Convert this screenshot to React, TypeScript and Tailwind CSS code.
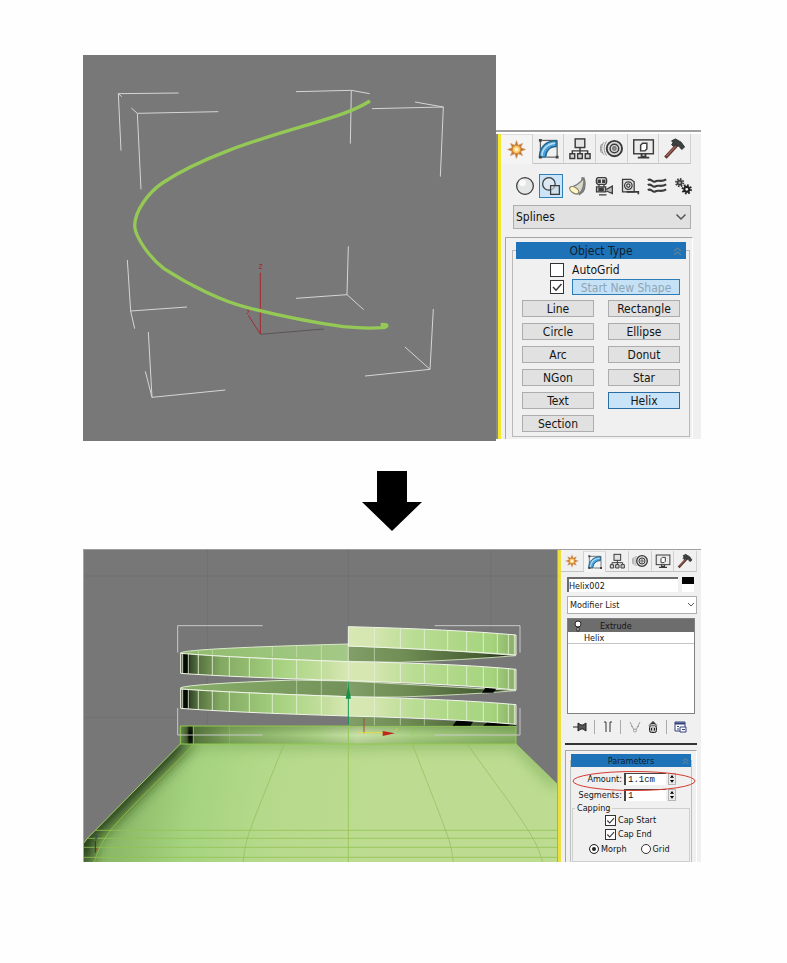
import type { ReactNode } from 'react';

type IconProps = { className: string };

function Icon({ className, children }: { className: string; children: ReactNode }) {
  return (
    <svg viewBox="0 0 24 24" className={className} fill="none" stroke="#3b3b3b" strokeWidth="1.5" aria-hidden="true">
      {children}
    </svg>
  );
}

const CreateIcon = ({ className }: IconProps) => (
  <Icon className={className}>
    <path d="M12 2.500 13.800 7.500 18.500 5.500 16.500 10 21.500 12 16.500 14 18.500 18.500 13.800 16.500 12 21.500 10.200 16.500 5.500 18.500 7.500 14 2.500 12 7.500 10 5.500 5.500 10.200 7.500Z" fill="#b9743a" stroke="#dfa878" strokeWidth=".6" />
    <circle cx="12" cy="12" r="4.300" fill="#ffd27a" stroke="#dc8b32" />
    <circle cx="12" cy="12" r="1.800" fill="#fff6d8" stroke="none" />
  </Icon>
);

const ModifyIcon = ({ className }: IconProps) => (
  <Icon className={className}>
    <path d="M3.500 20V3.500H21v17M10 21h11" strokeWidth="1" />
    <path d="M2.500 21C2.500 10.500 9.500 4 20 4v6c-7 0-11 5-11 11Z" fill="#4aa0d8" stroke="#23668f" />
    <path d="M5 20C5.500 12.500 10.500 7 19 6.300" stroke="#b4dcf3" strokeWidth="1.800" />
    <path d="M2 2h3v3H2zM19.500 19.500h3v3h-3zM2 19.500h3v3H2z" fill="#444" stroke="none" />
  </Icon>
);

const HierarchyIcon = ({ className }: IconProps) => (
  <Icon className={className}>
    <rect x="7.500" y="2" width="10" height="9" fill="#e3e3e3" />
    <path d="M12.500 11v7M4.500 17.500v-3h16v3" />
    <path d="M2 17.500h5v5H2zM10 17.500h5v5h-5zM18 17.500h5v5h-5z" fill="#d5d5d5" />
  </Icon>
);

const MotionIcon = ({ className }: IconProps) => (
  <Icon className={className}>
    <circle cx="15" cy="12" r="8" strokeWidth="2" fill="#dcdcdc" />
    <circle cx="15" cy="12" r="4.500" />
    <circle cx="15" cy="12" r="1.800" fill="#999" stroke="#777" />
    <path d="M7 4.500c-3.500 4-3.500 11 0 15M4 5.500c-3 4-3 9 0 13M1.500 7.500c-1.500 3-1.500 6 0 9" stroke="#8b8b8b" strokeWidth="1" />
  </Icon>
);

const DisplayIcon = ({ className }: IconProps) => (
  <Icon className={className}>
    <rect x="1.800" y="3" width="20.500" height="14.500" fill="#ececec" />
    <path d="M9 8.500 11 6.500h4.500v6l-2 2H9z" fill="#fff" />
    <path d="M10 17.500v3h4v-3M6 21.500h12" strokeWidth="2" />
  </Icon>
);

const HammerIcon = ({ className }: IconProps) => (
  <Icon className={className}>
    <path d="M2.500 21.500 15 8" stroke="#5b332a" strokeWidth="3.500" />
    <path d="M3.500 20 14 8.500" stroke="#a3655a" strokeWidth="1.500" />
    <path d="m9 4 4-2 6 3.500 3.500 5-3 2.500-3-3.500-3.500-1-2 1.500-2-2 1.500-2z" fill="#3e4142" stroke="#2d3030" strokeWidth="1" />
  </Icon>
);

const panels = [
  { name: 'Create', Glyph: CreateIcon },
  { name: 'Modify', Glyph: ModifyIcon },
  { name: 'Hierarchy', Glyph: HierarchyIcon },
  { name: 'Motion', Glyph: MotionIcon },
  { name: 'Display', Glyph: DisplayIcon },
  { name: 'Utilities', Glyph: HammerIcon },
];

function PanelTabs({ active, size }: { active: string; size: 'large' | 'small' }) {
  const large = size === 'large';
  return (
    <div className={large ? 'flex h-[30px] pr-2.5' : 'flex h-[22px] pt-px pr-1'} role="tablist">
      {panels.map(({ name, Glyph }) => (
        <button
          key={name}
          type="button"
          role="tab"
          aria-label={name}
          aria-selected={name === active}
          className={
            'flex flex-1 items-center justify-center border-r border-[#d0d0d0] ' +
            (name === active ? 'border-t border-t-[#dcdcdc] bg-[#f4f4f4]' : 'border-b border-b-[#c4c4c4]')
          }
        >
          <Glyph className={large ? 'size-[23px]' : 'size-4'} />
        </button>
      ))}
    </div>
  );
}

const categories: { name: string; art: ReactNode }[] = [
  {
    name: 'Geometry',
    art: (
      <>
        <circle cx="12" cy="12" r="10" fill="#e4e6e6" />
        <circle cx="9" cy="8" r="4" fill="#fafafa" stroke="none" />
      </>
    ),
  },
  {
    name: 'Shapes',
    art: (
      <>
        <circle cx="9.500" cy="9.500" r="7.500" fill="#dce9f2" />
        <path d="M11.500 11.500H22V22H11.500z" fill="#cfdfea" fillOpacity=".6" />
      </>
    ),
  },
  {
    name: 'Lights',
    art: (
      <>
        <path d="M17 2c5 1 4 13 1 17l-4 3z" fill="#8b8d87" stroke="#777" />
        <path d="M19 2.500C14 9 9 12 2.500 13.500c0 5 5 8.500 9.500 8C17 20 20 10 19 2.500Z" fill="#d8d8cb" stroke="#777" />
        <ellipse cx="7.500" cy="17" rx="6" ry="3.500" transform="rotate(32 7.500 17)" fill="#fff6c2" stroke="#8a8875" />
      </>
    ),
  },
  {
    name: 'Cameras',
    art: (
      <>
        <path d="M5 2h8c3 0 3 8 0 8H5C2 10 2 2 5 2Z" fill="#e4e4e4" />
        <path d="M5 5h2.500v2.500H5zM10.500 5H13v2.500h-2.500zM6 10v3M12 10v3" fill="#333" />
        <path d="M3 13h11v6H3zM15 16l7-4v9l-7-3M6 22.500h9" fill="#bbb" />
        <path d="M6 14.500h5v3H6z" fill="#333" />
      </>
    ),
  },
  {
    name: 'Helpers',
    art: (
      <>
        <path d="M3 4h10l4 3v12H3z" fill="#dedede" />
        <circle cx="10" cy="11.500" r="4.500" fill="#f3f3f3" />
        <circle cx="10" cy="11.500" r="2" />
        <path d="M8 19h14v3" strokeWidth="2" />
      </>
    ),
  },
  {
    name: 'Space Warps',
    art: (
      <path
        d="M1 5c4-3 6 4 9 1.500S17 8 23 4M1 11c4-3 6 4 9 1.500s7 1.500 13-2.500M1 17c4-3 6 4 9 1.500s7 1.500 13-2.500"
        strokeWidth="2.500"
      />
    ),
  },
  {
    name: 'Systems',
    art: (
      <>
        <circle cx="8" cy="8" r="2.500" fill="#aaa" strokeWidth="2" />
        <circle cx="8" cy="8" r="4.500" strokeWidth="2" strokeDasharray="2 1.500" />
        <circle cx="16.500" cy="16" r="3" strokeWidth="2.500" stroke="#222" />
        <circle cx="16.500" cy="16" r="5" strokeWidth="2.500" strokeDasharray="2 1.900" stroke="#222" />
      </>
    ),
  },
];

function Chevrons({ className }: IconProps) {
  return (
    <svg viewBox="0 0 9 10" className={className} fill="none" stroke="#5c8198" strokeWidth="1.300" aria-hidden="true">
      <path d="m1 5 3.500-3L8 5M1 9l3.500-3L8 9" />
    </svg>
  );
}

function SelectArrow({ className }: IconProps) {
  return (
    <svg viewBox="0 0 12 8" className={className} fill="none" stroke="#555" strokeWidth="1.500" aria-hidden="true">
      <path d="m1.500 1.500 4.500 4.500 4.500-4.500" />
    </svg>
  );
}

function CheckBox({ id, size, checked }: { id: string; size: string; checked?: boolean }) {
  return (
    <span className={'relative block shrink-0 ' + size}>
      <input
        id={id}
        type="checkbox"
        defaultChecked={checked}
        className="peer block size-full appearance-none border border-[#333] bg-white"
      />
      <svg viewBox="0 0 14 14" className="pointer-events-none absolute inset-0 hidden size-full peer-checked:block" fill="none" stroke="#333" strokeWidth="1.400" aria-hidden="true">
        <path d="m3 7 3 3.200L11.500 4" />
      </svg>
    </span>
  );
}

const shapes = ['Line', 'Rectangle', 'Circle', 'Ellipse', 'Arc', 'Donut', 'NGon', 'Star', 'Text', 'Helix', 'Section'];

function CreatePanel() {
  return (
    <aside className="mb-0.5 flex w-[205px] shrink-0 flex-col self-end border-t-2 border-[#a0a0a0] bg-[#f0f0f0] text-xs leading-4">
      <div className="flex border-t-2 border-white">
        <div className="w-[5px] shrink-0 border-r-3 border-[#f3e72b] bg-[#8a8a8a]" />
        <div className="min-w-0 flex-1">
          <PanelTabs active="Create" size="large" />
          <div className="flex justify-between pt-2.5 pr-1.5 pl-3">
            {categories.map(({ name, art }) => (
              <button
                key={name}
                type="button"
                aria-label={name}
                className={
                  'flex size-6 items-center justify-center ' +
                  (name === 'Shapes' ? 'border border-[#2f7fb8] bg-[#cbe4f7]' : '')
                }
              >
                <Icon className="size-5">{art}</Icon>
              </button>
            ))}
          </div>
          <div className="relative mt-[7px] mr-2.5 ml-3">
            <select aria-label="Category" className="block h-6 w-full appearance-none border border-[#adadad] bg-[#e1e1e1] px-0.5 text-[#111]">
              <option>Splines</option>
            </select>
            <SelectArrow className="pointer-events-none absolute top-2 right-1 w-3" />
          </div>
          <div className="mt-2 mr-2 ml-1 border-t border-r border-l border-[#a6a6a6] border-r-white pt-1 pr-0.5 pb-0.5 pl-1.5">
            <section className="relative px-1">
              <div className="absolute inset-x-0 top-2 bottom-0 border border-[#b9b9b9]" />
              <h2 className="relative flex h-[17px] items-center justify-center bg-[#1e73b8] text-[#10202c]">
                Object Type
                <Chevrons className="absolute right-1 w-[9px]" />
              </h2>
              <div className="relative px-1.5 pt-[3px] pb-[5px]">
                <div className="flex items-center gap-2 pl-7">
                  <CheckBox id="autogrid" size="size-[14px]" />
                  <label htmlFor="autogrid">AutoGrid</label>
                </div>
                <div className="flex items-center gap-2 pt-px pl-7">
                  <CheckBox id="startnew" size="size-[14px]" checked />
                  <button type="button" aria-labelledby="startnew-text" className="h-4 flex-1 overflow-hidden border border-[#2b7cb8] bg-[#c5e1f6] text-[#8fa6b6]">
                    <label id="startnew-text" htmlFor="startnew">Start New Shape</label>
                  </button>
                </div>
                <div className="grid grid-cols-2 gap-x-3.5 gap-y-1.5 pt-[5px]">
                  {shapes.map((shape) => (
                    <button
                      key={shape}
                      type="button"
                      className={
                        'flex h-[17px] items-center justify-center border ' +
                        (shape === 'Helix' ? 'border-[#2b6ea3] bg-[#c9e3f8]' : 'border-[#adadad] bg-[#e1e1e1]')
                      }
                    >
                      {shape}
                    </button>
                  ))}
                </div>
              </div>
            </section>
          </div>
        </div>
      </div>
    </aside>
  );
}

function Spinner({ label }: { label: string }) {
  return (
    <span className="flex w-2 shrink-0 flex-col border border-[#b5b5b5] bg-[#e9e9e9]">
      <button type="button" aria-label={'Increase ' + label} className="flex h-[5px] items-center justify-center">
        <svg viewBox="0 0 6 4" className="w-1" aria-hidden="true"><path d="M3 0 6 4H0z" /></svg>
      </button>
      <button type="button" aria-label={'Decrease ' + label} className="flex h-[5px] items-center justify-center">
        <svg viewBox="0 0 6 4" className="w-1" aria-hidden="true"><path d="M3 4 6 0H0z" /></svg>
      </button>
    </span>
  );
}

function NumberRow({ id, label, value }: { id: string; label: string; value: string }) {
  return (
    <div className="flex h-4 items-center justify-end gap-0.5 pr-4">
      <label htmlFor={id}>{label}:</label>
      <input
        id={id}
        defaultValue={value}
        className="h-3 w-[42px] border-t border-l-2 border-[#444] bg-white px-0.5 font-['Liberation_Mono',monospace]"
      />
      <Spinner label={label} />
    </div>
  );
}

const Separator = () => <span className="h-3.5 w-px bg-[#aaa]" />;

function StackTools() {
  return (
    <div className="flex h-[18px] items-center justify-between pr-3.5 pl-3">
      <button type="button" aria-label="Pin stack">
        <svg viewBox="0 0 14 10" className="w-3.5" stroke="#222" fill="#555" aria-hidden="true">
          <path d="M0 5h5M5 1v8l3-2h2l3 2V1l-3 2H8z" />
        </svg>
      </button>
      <Separator />
      <button type="button" aria-label="Show end result">
        <svg viewBox="0 0 10 12" className="w-2.5" fill="none" stroke="#333" aria-hidden="true">
          <path d="M1 1h2v10M9 1H7v10" />
        </svg>
      </button>
      <Separator />
      <button type="button" aria-label="Make unique">
        <svg viewBox="0 0 12 12" className="w-3" fill="none" stroke="#a0a0a0" aria-hidden="true">
          <path d="m1 1 4 8M11 1 7 9" />
          <circle cx="6" cy="9.500" r="1.500" />
          <path d="M2 5.500h2M8 5.500h2" />
        </svg>
      </button>
      <button type="button" aria-label="Remove modifier">
        <svg viewBox="0 0 10 12" className="w-2.5" fill="#bbb" stroke="#222" aria-hidden="true">
          <rect x="1.500" y="4.500" width="7" height="7" rx="2" />
          <path d="M1 4.500c2-3 6-3 8 0M4 2.500V1h2v1.500" />
          <path d="M3.500 7v2.500M6.500 7v2.500" />
        </svg>
      </button>
      <Separator />
      <button type="button" aria-label="Configure modifier sets">
        <svg viewBox="0 0 13 12" className="w-[13px]" fill="#fff" stroke="#31417c" aria-hidden="true">
          <path d="M1 1h10v9H1z" />
          <path d="M1 2.500h10" strokeWidth="2" />
          <path d="M3 5.500h2M3 8h2M6 6h6v5H6zM8 8.500h3" />
        </svg>
      </button>
    </div>
  );
}

function ModifyPanel() {
  return (
    <aside className="flex w-[143px] shrink-0 border-t border-[#a0a0a0] bg-[#f0f0f0] text-[9px] leading-3">
      <div className="w-[3px] shrink-0 bg-[#eadf3c]" />
      <div className="flex min-w-0 flex-1 flex-col">
        <PanelTabs active="Modify" size="small" />
        <div className="flex gap-1 pt-[5px] pr-[7px] pl-1.5">
          <input aria-label="Object name" defaultValue="Helix002" className="h-[15px] min-w-0 flex-1 border-t-2 border-l-2 border-[#6b6b6b] bg-white" />
          <button type="button" aria-label="Object color" className="h-[15px] w-3 border-b-8 border-white bg-black" />
        </div>
        <div className="relative mt-1 mr-1 ml-1.5">
          <select aria-label="Modifier List" className="block h-[18px] w-full appearance-none border border-[#adadad] bg-white px-0.5 text-[#222]">
            <option>Modifier List</option>
          </select>
          <SelectArrow className="pointer-events-none absolute top-1.5 right-0.5 w-2" />
        </div>
        <ul className="mt-1 mr-1.5 ml-1.5 h-24 border border-[#808080] bg-white">
          <li className="flex h-[13px] items-center bg-[#6d6d6d]">
            <svg viewBox="0 0 8 12" className="mx-1.5 w-2" fill="#fff" stroke="#222" aria-hidden="true">
              <circle cx="4" cy="4" r="3" />
              <path d="M3 7.500h2V11H3z" />
            </svg>
            <span className="pl-3">Extrude</span>
          </li>
          <li className="h-3 border-b border-[#c4c4c4] pl-4">Helix</li>
        </ul>
        <div className="pt-1"><StackTools /></div>
        <div className="mt-[7px] mr-1 ml-1 border-t-2 border-[#333]" />
        <div className="mt-[5px] mr-1 ml-1 flex-1 border-t border-r border-l border-[#a6a6a6] border-r-white px-1 pt-[3px]">
          <section className="relative h-full">
            <div className="absolute inset-x-0 top-1.5 bottom-0 border-x border-[#c0c0c0]" />
            <h2 className="relative mx-px flex h-[13px] items-center justify-center bg-[#1e73b8] text-[#10202c]">
              Parameters
              <Chevrons className="absolute right-0.5 w-[7px]" />
            </h2>
            <div className="relative pt-1">
              <NumberRow id="amount" label="Amount" value="1.1cm" />
              <NumberRow id="segments" label="Segments" value="1" />
              <svg viewBox="0 0 124 22" className="pointer-events-none absolute top-1 left-0.5 w-[124px] max-w-none" fill="none" stroke="#d63a30" aria-hidden="true">
                <ellipse cx="62" cy="10" rx="61" ry="9.500" />
              </svg>
            </div>
            <fieldset className="relative mx-0.5 border border-[#cfcfcf] pb-1">
              <legend className="ml-0.5 px-0.5 leading-[10px]">Capping</legend>
              <div className="flex h-3.5 items-center gap-0.5 pl-8">
                <CheckBox id="capstart" size="size-[11px]" checked />
                <label htmlFor="capstart">Cap Start</label>
              </div>
              <div className="flex h-3.5 items-center gap-0.5 pl-8">
                <CheckBox id="capend" size="size-[11px]" checked />
                <label htmlFor="capend">Cap End</label>
              </div>
              <div className="flex h-4 items-center gap-0.5 pl-4">
                <input id="morph" name="cap" type="radio" defaultChecked className="size-[10px] appearance-none rounded-full border border-[#333] bg-white checked:bg-[#222] checked:shadow-[inset_0_0_0_2px_white]" />
                <label htmlFor="morph">Morph</label>
                <input id="grid" name="cap" type="radio" className="ml-3 size-[10px] appearance-none rounded-full border border-[#333] bg-white checked:bg-[#222] checked:shadow-[inset_0_0_0_2px_white]" />
                <label htmlFor="grid">Grid</label>
              </div>
            </fieldset>
          </section>
        </div>
      </div>
    </aside>
  );
}

function SplineViewport() {
  return (
    <svg viewBox="9 15 1239 1158" className="block h-auto w-full bg-[#787878]" fill="none" role="img" aria-label="Helix spline in a perspective viewport">
      <path
        d="M296 129 115 131 123 302M115 131l10 9M154 174l18 16 243-5M172 190l11 228M648 125l166-4-3 160M814 121l55 10M1005 156l85 15-9 209M1090 171l-214 5M142 630l10 153 169-12M152 783l12 53M205 846l11 196 220-22M216 1042l-20-78M805 589l-4 145-153 11M801 734l50 45M1060 777l-10 181-195 20M1050 958l-75-67"
        stroke="#d5d5d5"
        strokeWidth="3"
      />
      <path d="M541 668v184l-36-56" stroke="#a52b2f" strokeWidth="3" />
      <path d="m541 853 190-16" stroke="#5d5555" strokeWidth="3" />
      <text x="536" y="657" fill="#a52b2f" fontSize="24">z</text>
      <text x="499" y="787" fill="#a52b2f" fontSize="24">y</text>
      <path
        d="M870 153C810 190 740 207 655 233 510 276 360 324 247 399 205 428 164 483 164 528 166 562 210 624 252 656 330 707 430 755 500 772 590 795 700 817 790 830 830 834 880 835 907 833 927 831 925 821 902 824"
        stroke="#94c956"
        strokeWidth="10"
      />
    </svg>
  );
}

const segments = [308, 325, 355, 397, 448, 508, 577, 650, 724, 805, 883, 961, 1033, 1103, 1160, 1210, 1252, 1285, 1303];

function ModelViewport() {
  const fronts = [
    'M805 260Q1120 268 1308 285V345Q1120 330 805 318Z',
    'M302 340Q450 353 805 365 1140 371 1308 388V450Q1140 433 805 422 450 411 302 400Z',
    'M302 447Q450 458 805 470 1140 478 1308 494V553Q1140 537 805 528 450 517 302 505Z',
  ];
  const body = 'M301 612 45 872Q20 895 9 912V969H1434V735L1308 612Z';
  return (
    <svg viewBox="9 27 1425 939" className="block h-full w-full bg-[#777]" fill="none" preserveAspectRatio="none" role="img" aria-label="Extruded helix around a bottle neck">
      <defs>
        <linearGradient id="front" gradientUnits="userSpaceOnUse" x1="302" x2="1308" y1="0" y2="0">
          <stop offset="0" stopColor="#80985f" />
          <stop offset=".007" stopColor="#050a03" />
          <stop offset=".021" stopColor="#050a03" />
          <stop offset=".028" stopColor="#34472a" />
          <stop offset=".05" stopColor="#55703d" />
          <stop offset=".12" stopColor="#83a962" />
          <stop offset=".3" stopColor="#a7d381" />
          <stop offset=".44" stopColor="#c6dfa0" />
          <stop offset=".5" stopColor="#d8e8b4" />
          <stop offset=".57" stopColor="#d5e6b0" />
          <stop offset=".7" stopColor="#b9dc92" />
          <stop offset=".93" stopColor="#a5d47d" />
          <stop offset="1" stopColor="#87ad65" />
        </linearGradient>
        <linearGradient id="backLeft" gradientUnits="userSpaceOnUse" x1="302" x2="805" y1="0" y2="0">
          <stop offset="0" stopColor="#8fba6b" />
          <stop offset=".4" stopColor="#98c377" />
          <stop offset="1" stopColor="#a4c987" />
        </linearGradient>
        <linearGradient id="backLow" gradientUnits="userSpaceOnUse" x1="302" x2="805" y1="0" y2="0">
          <stop offset="0" stopColor="#88ae68" />
          <stop offset="1" stopColor="#73915a" />
        </linearGradient>
        <linearGradient id="backRight" gradientUnits="userSpaceOnUse" x1="805" x2="1308" y1="0" y2="0">
          <stop offset="0" stopColor="#829e69" />
          <stop offset=".35" stopColor="#6e8c53" />
          <stop offset=".8" stopColor="#465c33" />
          <stop offset="1" stopColor="#0b1106" />
        </linearGradient>
        <linearGradient id="neck" gradientUnits="userSpaceOnUse" x1="301" x2="1308" y1="0" y2="0">
          <stop offset="0" stopColor="#6e9150" />
          <stop offset=".02" stopColor="#3f562d" />
          <stop offset=".026" stopColor="#020502" />
          <stop offset=".036" stopColor="#020502" />
          <stop offset=".042" stopColor="#53713b" />
          <stop offset=".15" stopColor="#82a862" />
          <stop offset=".4" stopColor="#a8cf83" />
          <stop offset=".53" stopColor="#cbe2aa" />
          <stop offset=".7" stopColor="#a9cf83" />
          <stop offset="1" stopColor="#8ab467" />
        </linearGradient>
        <linearGradient id="neckShade" x1="0" x2="0" y1="0" y2="1">
          <stop offset="0" stopColor="#4d7132" stopOpacity=".35" />
          <stop offset=".5" stopColor="#4d7132" stopOpacity="0" />
          <stop offset="1" stopColor="#4d7132" stopOpacity=".25" />
        </linearGradient>
        <linearGradient id="body" gradientUnits="userSpaceOnUse" x1="150" y1="700" x2="900" y2="830">
          <stop offset="0" stopColor="#8cba68" />
          <stop offset=".25" stopColor="#a4d37f" />
          <stop offset=".55" stopColor="#b5d98b" />
          <stop offset="1" stopColor="#bddc91" />
        </linearGradient>
        <filter id="soft" x="-30%" y="-30%" width="160%" height="160%">
          <feGaussianBlur stdDeviation="22" />
        </filter>
        <clipPath id="bodyClip"><path d={body} /></clipPath>
        <clipPath id="frontClip">{fronts.map((d) => <path key={d} d={d} />)}</clipPath>
      </defs>
      <path d="M9 108h1425M382 27v540M805 27v240M1232 27v250M9 532h290" stroke="#707070" strokeWidth="3" />
      <path d={body} fill="url(#body)" />
      <g clipPath="url(#bodyClip)">
        <path d="M320 585 10 895v80" stroke="#1c3011" strokeWidth="58" filter="url(#soft)" />
        <path d="M301 605H1308L1434 735" stroke="#78a957" strokeWidth="24" filter="url(#soft)" />
        <path
          d="M9 871h1425M9 895h1425M9 922h1425M9 952h1425M340 614C250 710 160 790 95 867 65 905 50 940 42 969M805 612v357"
          stroke="#93c352"
          strokeWidth="3"
          strokeOpacity=".8"
        />
        <path
          d="M612 612C570 720 535 800 505 885 495 920 490 945 490 969M997 612c40 105 75 190 100 260 15 35 20 70 23 97M1162 612c70 100 140 190 180 255 25 38 38 70 46 100"
          stroke="#93bd5c"
          strokeWidth="3"
          strokeOpacity=".7"
        />
      </g>
      <path d="M301 612 45 872Q20 895 9 912M1308 612l126 123" stroke="#a1cb6b" strokeWidth="3" />
      <path d="M301 558h1007v54H301z" fill="url(#neck)" />
      <path d="M301 558h1007v54H301z" fill="url(#neckShade)" stroke="#90cb4d" strokeWidth="3" />
      <path d="M340 558v54M805 558v54" stroke="#90c954" strokeWidth="3" />
      <path d="M448 558v54M997 558v30" stroke="#90c954" strokeWidth="3" strokeOpacity=".5" />
      <path d="M302 338Q330 325 805 312V365Q450 353 302 340Z" fill="url(#backLeft)" stroke="#dae8cb" strokeWidth="3" />
      <path d="M805 318Q1120 330 1308 347 1150 360 960 367L805 364Z" fill="url(#backRight)" stroke="#c8d9b5" strokeWidth="3" />
      <path d="M302 443Q330 432 640 420L805 423V470Q450 458 302 447Z" fill="url(#backLow)" stroke="#dae8cb" strokeWidth="3" />
      <path d="M805 423 1308 452Q1150 465 960 471H805Z" fill="url(#backRight)" stroke="#c8d9b5" strokeWidth="3" />
      <path d="M805 528 1308 553V557H805Z" fill="url(#backRight)" />
      <path d="m1218 440 34 2-12 16h-34zM1130 541l50 3-8 13h-54zM1222 546l64 8v3h-76z" fill="#020402" />
      {fronts.map((d) => (
        <path key={d} d={d} fill="url(#front)" stroke="#f0f6e8" strokeWidth="3" />
      ))}
      <g clipPath="url(#frontClip)" stroke="#e5f0d8" strokeWidth="3" strokeOpacity=".85">
        {segments.map((x) => <path key={x} d={`M${x} 255v305`} />)}
      </g>
      <path d="M883 318v238M355 333v20M397 330v20M577 320v30M650 317v35M724 315v45M650 420v45M724 423v45M961 533v23M1033 537v19" stroke="#dceccb" strokeWidth="3" strokeOpacity=".55" />
      <path d="M548 257H293v81M1064 257h256v81M293 504v81h255M1320 504v81h-256" stroke="#c8c8c8" strokeWidth="3" />
      <path d="M805 425v128" stroke="#129553" strokeWidth="3" />
      <path d="m805 437 8 39h-16z" fill="#109448" />
      <path d="M852 534v46" stroke="#a94d32" strokeWidth="3" />
      <path d="M835 578h74M946 572l6-7" stroke="#e2dd45" strokeWidth="3" />
      <path d="m908 573 37 7-37 8z" fill="#bf281c" />
      <path d="M46 938v-35" stroke="#26366c" strokeWidth="3" />
      <text x="44" y="898" fill="#26366c" fontSize="18">z</text>
      <text x="44" y="934" fill="#a33524" fontSize="18">x</text>
      <path d="M9 28h1425" stroke="#a4a4a4" strokeWidth="3" />
      <path d="M10 27v942M1433 27v942" stroke="#bfb31d" strokeWidth="4" />
    </svg>
  );
}

export default function App() {
  return (
    <main className="min-h-screen bg-[#fefefe] pt-[55px] pr-[86px] pb-[100px] pl-[83px] font-['DejaVu_Sans_Condensed','DejaVu_Sans',sans-serif] text-[#151515]">
      <div className="flex">
        <div className="min-w-0 flex-1"><SplineViewport /></div>
        <CreatePanel />
      </div>
      <div className="flex justify-center pt-[30px] pb-[18px]">
        <svg viewBox="0 0 60 60" className="w-[60px]" aria-label="Next step" role="img">
          <path d="M15 0h30v31h15L30 60 0 31h15z" />
        </svg>
      </div>
      <div className="flex">
        <div className="relative min-w-0 flex-1"><div className="absolute inset-0"><ModelViewport /></div></div>
        <ModifyPanel />
      </div>
    </main>
  );
}
